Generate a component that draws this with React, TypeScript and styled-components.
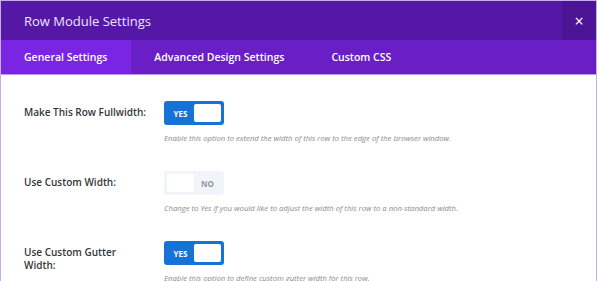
import styled, { createGlobalStyle } from 'styled-components'

const GlobalStyle = createGlobalStyle`
  body {
    margin: 0;
    background: #FFF;
    font-family: "Open Sans", "Liberation Sans", sans-serif;
  }
`

//          data: setting rows          //
const rows = [
  {
    label: 'Make This Row Fullwidth:',
    on: true,
    desc: 'Enable this option to extend the width of this row to the edge of the browser window.',
  },
  {
    label: 'Use Custom Width:',
    on: false,
    desc: 'Change to Yes if you would like to adjust the width of this row to a non-standard width.',
  },
  {
    label: 'Use Custom Gutter Width:',
    on: true,
    desc: 'Enable this option to define custom gutter width for this row.',
  },
]

const tabs = ['General Settings', 'Advanced Design Settings', 'Custom CSS']

//          component: toggle switch          //
const Toggle = ({ on }: { on: boolean }) => (
  <ToggleE $on={on}>
    {on ? <ToggleText $on>YES</ToggleText> : <Knob />}
    {on ? <Knob /> : <ToggleText $on={false}>NO</ToggleText>}
  </ToggleE>
)

//          render: row settings modal          //
export default function App() {
  return (
    <>
      <GlobalStyle />
      <Frame>
        <Header>
          <Title>Row Module Settings</Title>
          <Close>×</Close>
        </Header>
        <TabBar>
          {tabs.map((t, i) => (
            <Tab key={t} $active={i === 0}>{t}</Tab>
          ))}
        </TabBar>
        <Body>
          {rows.map((r) => (
            <Row key={r.label}>
              <Label>{r.label}</Label>
              <Field>
                <Toggle on={r.on} />
                <Desc>{r.desc}</Desc>
              </Field>
            </Row>
          ))}
        </Body>
      </Frame>
    </>
  )
}

const Frame = styled.div`
  width: 597px;
  height: 281px;
  overflow: hidden;
  box-sizing: border-box;
  border: 1px solid #C4AEEE;
  border-bottom: none;
  background: #FFF;
`

const Header = styled.div`
  display: flex;
  align-items: stretch;
  height: 39px;
  background: #5518A6;
`

const Title = styled.div`
  flex: 1;
  display: flex;
  align-items: center;
  padding-left: 23px;
  color: #EDE4FA;
  font-size: 13px;
`

const Close = styled.div`
  width: 34px;
  display: flex;
  align-items: center;
  justify-content: center;
  background: #4B1494;
  color: #FFF;
  font-size: 16px;
`

const TabBar = styled.div`
  display: flex;
  height: 34px;
  background: #6A1FC6;
  border-bottom: 1px solid #B999EC;
`

const Tab = styled.div<{ $active: boolean }>`
  display: flex;
  align-items: center;
  padding: 0 24px 0 23px;
  color: #FFF;
  font-size: 10.5px;
  font-weight: 600;
  background: ${({ $active }) => ($active ? '#7A25E3' : 'transparent')};
`

const Body = styled.div`
  display: flex;
  flex-direction: column;
  gap: 28px;
  padding: 26px 0 0 23px;
`

const Row = styled.div`
  display: flex;
  align-items: flex-start;
`

const Label = styled.div`
  flex: 0 0 140px;
  box-sizing: border-box;
  padding: 5px 16px 0 0;
  color: #32373C;
  font-size: 10px;
  font-weight: 600;
  line-height: 13px;
`

const Field = styled.div`
  display: flex;
  flex-direction: column;
  gap: 8px;
`

const ToggleE = styled.div<{ $on: boolean }>`
  display: flex;
  align-items: center;
  width: 60px;
  height: 24px;
  padding: 3px;
  box-sizing: border-box;
  border-radius: 3px;
  background: ${({ $on }) => ($on ? '#1672D6' : '#F1F4F8')};
`

const Knob = styled.div`
  width: 27px;
  height: 18px;
  border-radius: 2px;
  background: #FFF;
`

const ToggleText = styled.div<{ $on: boolean }>`
  flex: 1;
  text-align: center;
  font-size: 8px;
  font-weight: 700;
  color: ${({ $on }) => ($on ? '#FFF' : '#8E96A1')};
`

const Desc = styled.div`
  color: #878C94;
  font-size: 7.7px;
  font-style: italic;
`
